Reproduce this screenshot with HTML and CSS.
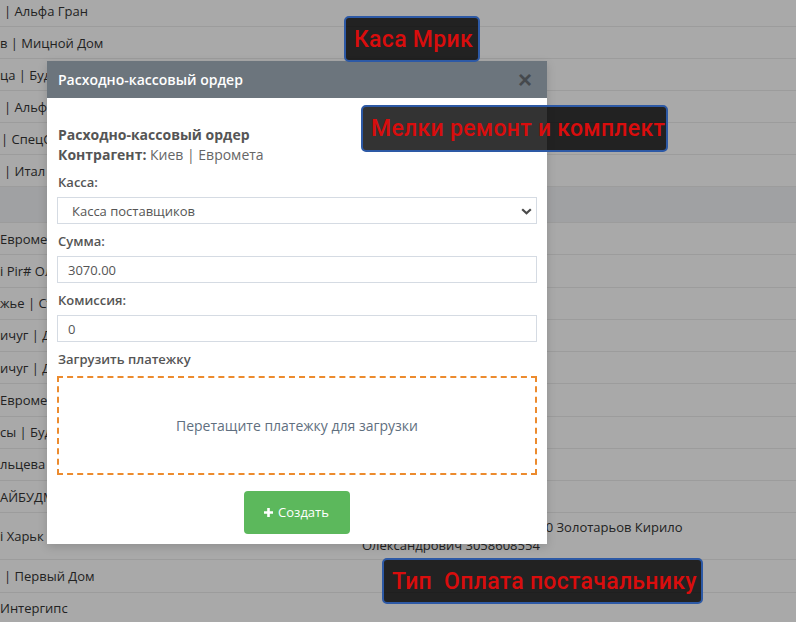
FILE: index.html
```html
<!DOCTYPE html>
<html lang="ru">
<head>
<meta charset="utf-8">
<title>Расходно-кассовый ордер</title>
<link rel="stylesheet" href="styles.css">
</head>
<body>
<div class="table">
  <div class="row"><div class="c1 in4">| Альфа Гран</div><div class="c2"></div></div>
  <div class="row"><div class="c1">в | Мицной Дом</div><div class="c2"></div></div>
  <div class="row"><div class="c1">ца | Буд</div><div class="c2"></div></div>
  <div class="row"><div class="c1 in4">| Альф</div><div class="c2"></div></div>
  <div class="row"><div class="c1 in1">| СпецС</div><div class="c2"></div></div>
  <div class="row"><div class="c1 in4">| Итал</div><div class="c2"></div></div>
  <div class="band"></div>
  <div class="row low"><div class="c1">Евромет</div><div class="c2"></div></div>
  <div class="row low"><div class="c1">i Pir# Ол</div><div class="c2"></div></div>
  <div class="row low"><div class="c1">жье | Ст</div><div class="c2"></div></div>
  <div class="row low"><div class="c1">ичуг | Д</div><div class="c2"></div></div>
  <div class="row low"><div class="c1">ичуг | Д</div><div class="c2"></div></div>
  <div class="row low"><div class="c1">Евромет</div><div class="c2"></div></div>
  <div class="row low"><div class="c1">сы | Буд</div><div class="c2"></div></div>
  <div class="row low"><div class="c1">льцева</div><div class="c2"></div></div>
  <div class="row low"><div class="c1">АЙБУДМ</div><div class="c2"></div></div>
  <div class="row tall"><div class="c1">і Харьк</div><div class="c2">ФОП р/р 260005200132200650 Золотарьов Кирило<br>Олександрович 3058608554</div></div>
  <div class="row low"><div class="c1 in4">| Первый Дом</div><div class="c2"></div></div>
  <div class="row low"><div class="c1">Интергипс</div><div class="c2"></div></div>
</div>

<div class="modal">
  <div class="modal-header">
    <span class="modal-title">Расходно-кассовый ордер</span>
    <span class="close">×</span>
  </div>
  <div class="modal-body">
    <div class="doc-title">Расходно-кассовый ордер</div>
    <div class="doc-party"><b>Контрагент:</b> Киев | Еврометa</div>
    <div class="group">
      <label class="lbl">Касса:</label>
      <div class="select-wrap">
        <select class="field select"><option>Касса поставщиков</option></select>
        <svg class="chev" width="11" height="7" viewBox="0 0 11 7"><path d="M1.2 1.2 L5.5 5.3 L9.8 1.2" fill="none" stroke="#4a4a4a" stroke-width="2.2"/></svg>
      </div>
    </div>
    <div class="group">
      <label class="lbl">Сумма:</label>
      <input class="field" type="text" value="3070.00">
    </div>
    <div class="group">
      <label class="lbl">Комиссия:</label>
      <input class="field" type="text" value="0">
    </div>
    <div class="group last">
      <label class="lbl">Загрузить платежку</label>
      <div class="dropzone">Перетащите платежку для загрузки</div>
    </div>
    <div class="footer">
      <button class="btn-create"><svg width="9" height="9" viewBox="0 0 9 9"><path d="M3.2 0h2.6v3.2H9v2.6H5.8V9H3.2V5.8H0V3.2h3.2z" fill="#fff"/></svg>Создать</button>
    </div>
  </div>
</div>

<div class="tip tip-1">Каса Мрик</div>
<div class="tip tip-2">Мелки ремонт и комплект</div>
<div class="tip tip-3">Тип&nbsp; Оплата постачальнику</div>
</body>
</html>
```

FILE: styles.css
```css
* { box-sizing: border-box; }
html, body { margin: 0; padding: 0; }
body {
  width: 796px;
  height: 622px;
  overflow: hidden;
  background: #a9a9a9;
  font-family: "Open Sans", "Noto Sans", sans-serif;
  font-size: 13px;
  color: #222;
  position: relative;
}

.table { margin-top: -5px; }
.row {
  display: flex;
  align-items: center;
  height: 32px;
  border-bottom: 1px solid #9c9c9c;
  line-height: 18px;
}
.row.low { height: 32.25px; }
.row.tall { height: 47px; }
.band {
  height: 36px;
  background: #a0a1a3;
  border-bottom: 1px solid #9c9c9c;
}
.c1 { width: 362px; white-space: nowrap; }
.c1.in4 { padding-left: 4px; }
.c1.in1 { padding-left: 1px; }
.c2 { flex: 1; white-space: nowrap; }

.modal {
  position: absolute;
  left: 47px;
  top: 61px;
  width: 500px;
  background: #fff;
  box-shadow: 0 3px 9px rgba(0,0,0,.15);
}
.modal-header {
  height: 37px;
  background: #6c757d;
  display: flex;
  align-items: center;
  justify-content: space-between;
  padding: 0 15px 0 11px;
}
.modal-title {
  color: #fff;
  font-size: 14px;
  font-weight: 600;
}
.close {
  color: #45494d;
  font-size: 24px;
  font-weight: 700;
  line-height: 1;
  font-family: "Liberation Sans", Arial, sans-serif;
}
.modal-body { padding: 27px 10px 10px 10px; }
.doc-title {
  font-size: 14px;
  font-weight: 700;
  color: #555;
  line-height: 20px;
  padding-left: 1px;
}
.doc-party {
  font-size: 14px;
  color: #666;
  line-height: 20px;
  padding-left: 1px;
  margin-bottom: 8px;
}
.doc-party b { color: #555; font-weight: 700; }

.group { margin-bottom: 8px; }
.group.last { margin-bottom: 0; }
.lbl {
  display: block;
  font-size: 13px;
  font-weight: 600;
  color: #555;
  line-height: 18px;
  margin-bottom: 6px;
  padding-left: 1px;
}
.field {
  display: block;
  width: 100%;
  height: 27px;
  border: 1px solid #d5dbe3;
  border-radius: 0;
  background: #fff;
  font-family: "Open Sans", "Noto Sans", sans-serif;
  font-size: 13px;
  color: #555;
  padding: 0 10px;
  margin: 0;
  outline: none;
}
.select-wrap { position: relative; }
.select {
  appearance: none;
  -webkit-appearance: none;
  padding-left: 14px;
}
.chev { position: absolute; right: 5px; top: 11px; }

.dropzone {
  margin-top: 8px;
  height: 99px;
  border: 2px dashed #ec8b2e;
  display: flex;
  align-items: center;
  justify-content: center;
  font-size: 14px;
  color: #5f6f80;
}
.footer {
  display: flex;
  justify-content: center;
  margin-top: 16px;
  padding-right: 1px;
}
.btn-create {
  width: 106px;
  height: 43px;
  background: #5cb85c;
  border: none;
  border-radius: 4px;
  color: #fff;
  font-family: "Open Sans", "Noto Sans", sans-serif;
  font-size: 13px;
  display: inline-flex;
  align-items: center;
  justify-content: center;
  gap: 5px;
  padding: 0 0 1px 0;
}

.tip {
  position: absolute;
  height: 46px;
  background: rgba(0,0,0,.8);
  border: 2px solid #2d59a5;
  border-radius: 5px;
  color: #d90d0d;
  font-family: Roboto, "Noto Sans", sans-serif;
  font-weight: 500;
  font-size: 23px;
  letter-spacing: 0.3px;
  display: flex;
  align-items: center;
  padding: 0 8px;
  white-space: nowrap;
}
.tip-1 { left: 344px; top: 16px; width: 136px; }
.tip-2 { left: 361px; top: 105px; width: 307px; height: 47px; }
.tip-3 { left: 382px; top: 558px; width: 321px; }
```
